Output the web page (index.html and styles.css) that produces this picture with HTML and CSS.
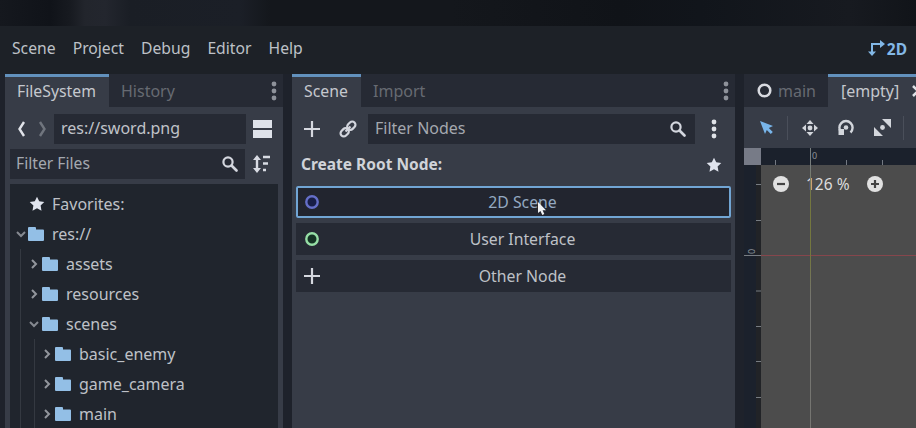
FILE: index.html
```html
<!DOCTYPE html>
<html lang="en">
<head>
<meta charset="utf-8">
<title>Editor</title>
<link rel="stylesheet" href="styles.css">
</head>
<body>
<svg class="defs" width="0" height="0" aria-hidden="true">
  <symbol id="star" viewBox="0 0 16 16"><path d="M8 .7 10.2 5.3 15.3 6 11.6 9.6 12.5 14.8 8 12.3 3.5 14.8 4.4 9.6.7 6 5.8 5.3Z" fill="#e0e4ee"/></symbol>
  <symbol id="folder" viewBox="0 0 16 15"><path d="M1 0h6q1 0 1 1v1.500h7q1 0 1 1V13q0 1-1 1H1q-1 0-1-1V1q0-1 1-1Z" fill="#93bfe6"/></symbol>
  <symbol id="search" viewBox="0 0 16 16"><circle cx="6" cy="6" r="4.600" fill="none" stroke="#d3d6de" stroke-width="2.200"/><path d="m9.500 9.500 5 5" stroke="#d3d6de" stroke-width="2.600" stroke-linecap="round"/></symbol>
  <symbol id="dots" viewBox="0 0 6 20"><g fill="currentColor"><circle cx="3" cy="3" r="2.400"/><circle cx="3" cy="10" r="2.400"/><circle cx="3" cy="17" r="2.400"/></g></symbol>
  <symbol id="plus" viewBox="0 0 16 16"><path d="M8 0v16M0 8h16" stroke="#d5d8df" stroke-width="2.200"/></symbol>
  <symbol id="right" viewBox="0 0 8 10"><path d="m2 1 4 4-4 4" fill="none" stroke="#92969c" stroke-width="2"/></symbol>
  <symbol id="down" viewBox="0 0 10 8"><path d="m1 2 4 4 4-4" fill="none" stroke="#858990" stroke-width="2"/></symbol>
</svg>
<div class="backdrop"></div>
<header class="menubar">
  <nav class="menus"><span>Scene</span><span>Project</span><span>Debug</span><span>Editor</span><span>Help</span></nav>
  <div class="mode"><svg width="18" height="17" viewBox="0 0 18 17"><path d="M4 13V4h10" fill="none" stroke="#83b8e6" stroke-width="2"/><path d="m12 0 5 4-5 4ZM0 11.500h8L4 16Z" fill="#83b8e6"/></svg><b>2D</b></div>
</header>
<main class="docks">
  <section class="dock files">
    <div class="tabs"><span class="tab active">FileSystem</span><span class="tab">History</span><svg class="kebab" width="6" height="20"><use href="#dots"/></svg></div>
    <div class="pathrow">
      <svg width="30" height="18" viewBox="0 0 30 18"><path d="M8 2 3.500 9 8 16" fill="none" stroke="#e0e3e9" stroke-width="2.400"/><path d="m24 2 4.500 7-4.500 7" fill="none" stroke="#70757e" stroke-width="2.400"/></svg>
      <div class="field path"><span>res://sword.png</span></div>
      <svg class="split" width="19" height="20" viewBox="0 0 19 20"><path d="M0 1h19v8H0zM0 11h19v8H0z" fill="#dee2ea"/></svg>
    </div>
    <div class="filterrow">
      <div class="field"><span>Filter Files</span><svg width="16" height="16"><use href="#search"/></svg></div>
      <svg class="sort" width="17" height="18" viewBox="0 0 17 18"><path d="M4 4v10M10 2h7M10 8.500h5M10 15h3" stroke="#d8dbe3" stroke-width="2.400"/><path d="M0 5 4 0l4 5ZM0 13h8l-4 5Z" fill="#d8dbe3"/></svg>
    </div>
    <div class="tree">
      <div class="row top"><svg class="fav" width="16" height="16"><use href="#star"/></svg><span>Favorites:</span></div>
      <div class="row top"><svg class="arrow" width="10" height="8"><use href="#down"/></svg><svg width="16" height="15"><use href="#folder"/></svg><span>res://</span></div>
      <div class="branch">
        <div class="row"><svg class="arrow" width="8" height="10"><use href="#right"/></svg><svg width="16" height="15"><use href="#folder"/></svg><span>assets</span></div>
        <div class="row"><svg class="arrow" width="8" height="10"><use href="#right"/></svg><svg width="16" height="15"><use href="#folder"/></svg><span>resources</span></div>
        <div class="row"><svg class="arrow" width="10" height="8"><use href="#down"/></svg><svg width="16" height="15"><use href="#folder"/></svg><span>scenes</span></div>
        <div class="branch inner">
          <div class="row"><svg class="arrow" width="8" height="10"><use href="#right"/></svg><svg width="16" height="15"><use href="#folder"/></svg><span>basic_enemy</span></div>
          <div class="row"><svg class="arrow" width="8" height="10"><use href="#right"/></svg><svg width="16" height="15"><use href="#folder"/></svg><span>game_camera</span></div>
          <div class="row"><svg class="arrow" width="8" height="10"><use href="#right"/></svg><svg width="16" height="15"><use href="#folder"/></svg><span>main</span></div>
        </div>
      </div>
    </div>
  </section>
  <section class="dock scene">
    <div class="tabs"><span class="tab active">Scene</span><span class="tab">Import</span><svg class="kebab" width="6" height="20"><use href="#dots"/></svg></div>
    <div class="noderow">
      <svg width="16" height="16"><use href="#plus"/></svg>
      <svg class="link" width="18" height="18" viewBox="0 0 18 18"><g transform="rotate(-45 9 9)" fill="none" stroke="#d3d6de" stroke-width="2.200"><rect x="-.2" y="5.800" width="9" height="6.400" rx="3.200"/><rect x="9.200" y="5.800" width="9" height="6.400" rx="3.200"/><path d="M5.500 9h7"/></g></svg>
      <div class="field"><span>Filter Nodes</span><svg width="16" height="16"><use href="#search"/></svg></div>
      <svg class="more" width="6" height="20"><use href="#dots"/></svg>
    </div>
    <div class="heading"><b>Create Root Node:</b><svg width="16" height="16"><use href="#star"/></svg></div>
    <div class="choices">
      <div class="choice selected"><svg width="16" height="16" viewBox="0 0 16 16"><circle cx="8" cy="8" r="5.700" fill="#181e46" stroke="#656fc8" stroke-width="2.400"/></svg><span>2D Scene</span>
        <svg class="pointer" width="9" height="14" viewBox="0 0 9 14"><path d="M1 0v11l2.500-2L5.300 13l2-1L5.600 8.200H9Z" fill="#f1f2f4"/></svg></div>
      <div class="choice"><svg width="16" height="16" viewBox="0 0 16 16"><circle cx="8" cy="8" r="5.700" fill="#143324" stroke="#96dfa6" stroke-width="2.400"/></svg><span>User Interface</span></div>
      <div class="choice"><svg width="16" height="16"><use href="#plus"/></svg><span>Other Node</span></div>
    </div>
  </section>
  <section class="editor">
    <div class="tabs"><span class="tab doc"><svg width="15" height="15" viewBox="0 0 15 15"><circle cx="7.500" cy="7.500" r="5.800" fill="none" stroke="#d8dae0" stroke-width="2.500"/></svg>main</span><span class="tab active"><span>[empty]</span><svg class="close" width="12" height="12" viewBox="0 0 12 12"><path d="m1 1 10 10M11 1 1 11" stroke="#dfe2e7" stroke-width="2.500"/></svg></span></div>
    <div class="tools">
      <svg width="14" height="14" viewBox="0 0 14 14"><path d="m0 0 13 5-4.200 2 4 4-2 2-4-4L5 13Z" fill="#78b5ea"/></svg>
      <i></i>
      <svg class="move" width="16" height="16" viewBox="0 0 16 16"><path d="m8 0 3.500 4h-7ZM8 16l3.500-4h-7ZM0 8l4-3.500v7ZM16 8l-4-3.500v7Z" fill="#d3d6dc"/><circle cx="8" cy="8" r="2.400" fill="#d3d6dc"/></svg>
      <svg class="rotate" width="18" height="17" viewBox="0 0 18 17"><path d="M4.500 13.500A6.600 6.600 0 1 1 13.500 13.500" fill="none" stroke="#d3d6dc" stroke-width="2.400"/><path d="M1.500 10h5.500v6H1.500Z" fill="#d3d6dc"/><circle cx="9" cy="8.500" r="2.300" fill="#d3d6dc"/></svg>
      <svg class="scale" width="17" height="17" viewBox="0 0 17 17"><path d="M8 0h9v9ZM0 8v9h9Z" fill="#d3d6dc"/><circle cx="8.500" cy="8.500" r="2.400" fill="#d3d6dc"/></svg>
      <i class="last"></i>
    </div>
    <div class="canvas">
      <div class="corner"></div>
      <svg class="ruler-x" width="155" height="17" viewBox="0 0 155 17"><path d="M14.500 12v5M85.500 12v5M121.500 12v5" stroke="#737982"/><text x="51" y="11">0</text></svg>
      <svg class="ruler-y" width="17" height="263" viewBox="0 0 17 263"><path d="M12 0h5v263h-5Z" fill="#212327"/><path d="M12 19.500h5M12 55.500h5M0 90.500h17M12 126h5M12 161.500h5M12 196.500h5M12 232.500h5" stroke="#777c82"/><text transform="translate(11 89) rotate(-90)">0</text></svg>
      <div class="view">
        <div class="zoom"><svg width="16" height="16" viewBox="0 0 16 16"><circle cx="8" cy="8" r="8" fill="#e1e1e1"/><path d="M4 8h8" stroke="#444" stroke-width="2.200"/></svg><span>126 %</span><svg width="16" height="16" viewBox="0 0 16 16"><circle cx="8" cy="8" r="8" fill="#e1e1e1"/><path d="M4 8h8M8 4v8" stroke="#444" stroke-width="2.200"/></svg></div>
      </div>
      <div class="axis-x"></div><div class="axis-y"></div>
    </div>
  </section>
</main>
</body>
</html>
```
FILE: styles.css
```css
* { box-sizing: border-box; }
body { margin: 0; width: 916px; height: 428px; overflow: hidden; background: #1e222b; color: #bec1c7; font: 16px/20px "Noto Sans", sans-serif; display: flex; flex-direction: column; white-space: nowrap; }
svg { display: block; flex: none; }
.defs { position: absolute; }
.backdrop { height: 26px; flex: none; background: linear-gradient(90deg, #15181e 0, #101319 50px, #171a20 70px, #22252c 85px, #23262e 105px, #1a1e25 130px, #1b1f27 240px, #14171c 270px, #14171c 450px, #101318 620px, #11151b 700px, #171a20 850px, #111419 100%); }
.menubar { height: 48px; flex: none; display: flex; justify-content: space-between; align-items: center; padding: 0 9px 3px 12px; background: #1d2127; }
.menus { display: flex; gap: 17.1px; font-size: 15.7px; padding-bottom: 1px; }
.mode { display: flex; gap: 1px; align-items: center; color: #83b8e6; font-size: 15.5px; }
.docks { flex: 1; min-height: 0; display: flex; gap: 9px; padding-left: 5px; }
.dock { background: #373c47; flex: none; display: flex; flex-direction: column; }
.files { width: 278px; }
.scene { width: 443px; }
.tabs { height: 33px; flex: none; display: flex; background: #262a34; color: #666a72; }
.tab { padding: 7px 12px; }
.tab.active { background: #373c47; border-top: 3px solid #6291bd; color: #c5c8ce; padding-top: 4px; }
.files .tab.active { width: 104px; font-size: 15.8px; }
.scene .tab.active { width: 69px; font-size: 15.8px; }
.kebab { color: #8e929a; margin: 7px 6px 0 auto; }
.field { background: #262a34; height: 30px; flex: 1; display: flex; align-items: center; justify-content: space-between; padding: 0 8px 0 7px; color: #a4a8af; }
.field span { padding-bottom: 2px; }
.pathrow { height: 30px; margin: 7px 12px 5px 11px; display: flex; align-items: center; }
.path { margin-left: 8px; color: #c0c3c9; }
.split { margin-left: 7px; }
.pathrow .split { margin-right: -.5px; }
.filterrow { height: 30px; margin: 0 13px 5px 5px; display: flex; align-items: center; }
.filterrow .field { padding: 0 7px 0 6px; font-size: 15.7px; }
.sort { margin-left: 8px; }
.tree { flex: 1; min-height: 0; overflow: hidden; margin: 0 5px; background: #20252d; padding-top: 5px; }
.row { height: 30px; display: flex; align-items: center; padding-left: 10px; }
.row span { margin-left: 8px; }
.row.top { padding-left: 6px; }
.fav { margin-left: 13px; }
.row.top .fav + span { margin-left: 7px; }
.arrow { margin-right: 5px; }
.row.top .arrow { margin-right: 2px; }
.branch { margin-left: 10px; border-left: 1px solid #343941; height: 240px; }
.branch .row { padding-left: 8px; }
.branch .arrow { width: 10px; margin-right: 3px; }
.inner { margin-left: 13px; }
.inner .row { padding-left: 7px; }
.noderow { height: 30px; margin: 7px 18px 0 12px; display: flex; align-items: center; }
.link { margin-left: 19px; }
.noderow .field { margin-left: 11px; padding-right: 9px; }
.more { margin-left: 16px; color: #e0e3e8; }
.heading { height: 42px; display: flex; justify-content: space-between; align-items: center; padding: 0 13px 0 9px; color: #d0d3d9; font-size: 15.5px; }
.heading b { padding-bottom: 2px; }
.choices { padding: 0 4px; display: flex; flex-direction: column; gap: 5px; }
.choice { height: 32px; display: grid; grid-template-columns: 16px 1fr; align-items: center; text-align: center; padding: 0 6px 0 8px; background: #262a34; position: relative; }
.selected { background: #22252f; color: #94a9c1; outline: 2px solid #71a5d4; outline-offset: -2px; border-radius: 2px; }
.choice span { font-size: 15.8px; }
.pointer { position: absolute; left: 241px; top: 16px; }
.editor { flex: 1; min-width: 0; overflow: hidden; display: flex; flex-direction: column; }
.editor .tab.active { width: 100px; display: flex; gap: 13px; padding-left: 13px; }
.doc { width: 84px; display: flex; gap: 6px; padding-left: 13px; }
.doc svg { margin-top: 2px; }
.close { margin-top: 4px; }
.tools { height: 41px; flex: none; background: #373c47; display: flex; align-items: center; padding: 0 0 0 16px; }
.tools i { width: 1px; height: 24px; background: #4a4f5a; margin-left: 13px; }
.move { margin-left: 14px; }
.rotate { margin-left: 19px; }
.scale { margin-left: 19px; }
.tools .last { margin-left: 12px; }
.canvas { flex: 1; display: grid; grid-template: 17px 1fr / 17px 1fr; position: relative; background: #1b212c; }
.corner { background: #777b87; }
.canvas text { font-size: 9px; fill: #8c9199; }
.view { background: #4c4c4c; overflow: hidden; }
.zoom { display: flex; align-items: center; padding: 9px 0 0 12px; color: #dcdcdc; font-size: 15.5px; }
.zoom span { width: 44px; margin: 0 17px 0 17px; }
.axis-x { position: absolute; left: 17px; right: 0; top: 107px; height: 1px; background: #86464c; }
.axis-y { position: absolute; left: 66px; top: 0; bottom: 0; width: 1px; background: linear-gradient(#777d7c 0, #777d7c 20px, #74773f 50px, #74773f 110px, #757571 150px); }
```
